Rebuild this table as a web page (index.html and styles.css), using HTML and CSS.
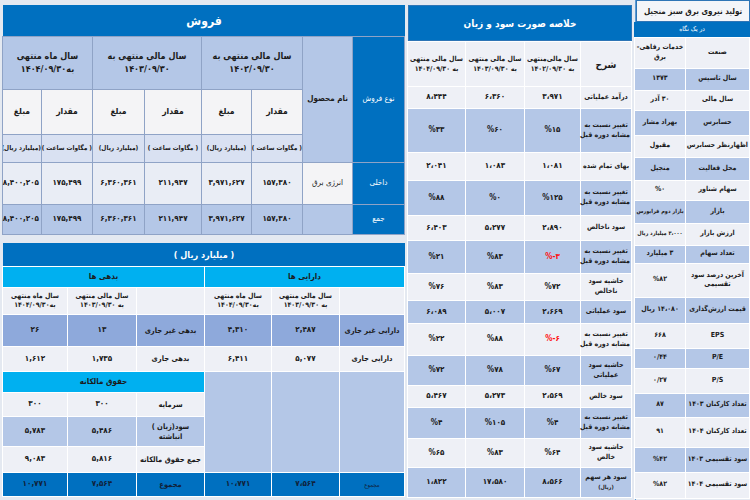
FILE: index.html
```html
<!DOCTYPE html>
<html lang="fa" dir="rtl">
<head>
<meta charset="utf-8">
<title>تولید نیروی برق سبز منجیل</title>
<link rel="stylesheet" href="styles.css">
</head>
<body>
<div class="page">

  <aside class="glance">
    <div class="glance-title">تولید نیروی برق سبز منجیل</div>
    <table class="gt">
      <colgroup><col class="c-gl"><col class="c-gv"></colgroup>
      <tr class="h15"><th colspan="2" class="dark small">در یک نگاه</th></tr>
      <tr class="w h31"><td>صنعت</td><td>خدمات رفاهی-<br>برق</td></tr>
      <tr class="b h22"><td>سال تاسیس</td><td>۱۳۷۳</td></tr>
      <tr class="w h20"><td>سال مالی</td><td>۳۰ آذر</td></tr>
      <tr class="b h25"><td>حسابرس</td><td>بهراد مشار</td></tr>
      <tr class="w h22"><td>اظهارنظر حسابرس</td><td>مقبول</td></tr>
      <tr class="b h23"><td>محل فعالیت</td><td>منجیل</td></tr>
      <tr class="w h20"><td>سهام شناور</td><td>%۰</td></tr>
      <tr class="b h23"><td>بازار</td><td class="fit">بازار دوم فرابورس</td></tr>
      <tr class="w h22"><td>ارزش بازار</td><td class="fit">۳،۰۰۰ میلیارد ریال</td></tr>
      <tr class="b h18"><td>تعداد سهام</td><td>۳ میلیارد</td></tr>
      <tr class="w h34"><td>آخرین درصد سود<br>تقسیمی</td><td>%۸۲</td></tr>
      <tr class="b h26"><td>قیمت ارزش‌گذاری</td><td>۱۴،۰۸۰ ریال</td></tr>
      <tr class="w h25"><td>EPS</td><td>۶۶۸</td></tr>
      <tr class="b h20"><td>P/E</td><td>۰/۴۴</td></tr>
      <tr class="w h25"><td>P/S</td><td>۰/۲۷</td></tr>
      <tr class="b h24"><td>تعداد کارکنان ۱۴۰۳</td><td>۸۷</td></tr>
      <tr class="w h30"><td>تعداد کارکنان ۱۴۰۴</td><td>۹۱</td></tr>
      <tr class="b h25"><td>سود تقسیمی ۱۴۰۳</td><td>%۴۲</td></tr>
      <tr class="w h26"><td>سود تقسیمی ۱۴۰۴</td><td>%۸۲</td></tr>
    </table>
  </aside>

  <section class="pl">
    <div class="bar pl-title">خلاصه صورت سود و زیان</div>
    <table class="pt">
      <colgroup><col class="c-p0"><col class="c-p1"><col class="c-p2"><col class="c-p3"></colgroup>
      <tr class="w h45 ph">
        <th class="big">شرح</th>
        <th>سال مالی‌منتهی<br>به ۱۴۰۲/۰۹/۳۰</th>
        <th>سال مالی منتهی<br>به ۱۴۰۳/۰۹/۳۰</th>
        <th>سال مالی منتهی<br>به ۱۴۰۴/۰۹/۳۰</th>
      </tr>
      <tr class="w h22"><td class="lbl">درآمد عملیاتی</td><td>۳،۹۷۱</td><td>۶،۳۶۰</td><td>۸،۴۴۴</td></tr>
      <tr class="b h44"><td class="lbl">تغییر نسبت به<br>مشابه دوره قبل</td><td>%۱۵</td><td>%۶۰</td><td>%۳۳</td></tr>
      <tr class="w h28"><td class="lbl">بهای تمام شده</td><td>۱،۰۸۱</td><td>۱،۰۸۳</td><td>۲،۰۴۱</td></tr>
      <tr class="b h35"><td class="lbl">تغییر نسبت به<br>مشابه دوره قبل</td><td>%۱۲۵</td><td>%۰</td><td>%۸۸</td></tr>
      <tr class="w h25"><td class="lbl">سود ناخالص</td><td>۲،۸۹۰</td><td>۵،۲۷۷</td><td>۶،۴۰۳</td></tr>
      <tr class="b h33"><td class="lbl">تغییر نسبت به<br>مشابه دوره قبل</td><td class="neg"><span class="ltr">%-۳</span></td><td>%۸۳</td><td>%۲۱</td></tr>
      <tr class="w h27"><td class="lbl">حاشیه سود<br>ناخالص</td><td>%۷۲</td><td>%۸۳</td><td>%۷۶</td></tr>
      <tr class="b h23"><td class="lbl">سود عملیاتی</td><td>۲،۶۶۹</td><td>۵،۰۰۷</td><td>۶،۰۸۹</td></tr>
      <tr class="w h32"><td class="lbl">تغییر نسبت به<br>مشابه دوره قبل</td><td class="neg"><span class="ltr">%-۶</span></td><td>%۸۸</td><td>%۲۲</td></tr>
      <tr class="b h30"><td class="lbl">حاشیه سود<br>عملیاتی</td><td>%۶۷</td><td>%۷۸</td><td>%۷۲</td></tr>
      <tr class="w h22"><td class="lbl">سود خالص</td><td>۲،۵۶۹</td><td>۵،۲۷۳</td><td>۵،۴۶۷</td></tr>
      <tr class="b h31"><td class="lbl">تغییر نسبت به<br>مشابه دوره قبل</td><td>%۴</td><td>%۱۰۵</td><td>%۴</td></tr>
      <tr class="w h29"><td class="lbl">حاشیه سود<br>خالص</td><td>%۶۴</td><td>%۸۳</td><td>%۶۵</td></tr>
      <tr class="b h30"><td class="lbl">سود هر سهم<br><span class="tiny">(ریال)</span></td><td>۸،۵۶۶</td><td>۱۷،۵۸۰</td><td>۱،۸۲۲</td></tr>
    </table>
  </section>

  <div class="leftcol">
    <section class="sales">
      <div class="bar sales-title">فروش</div>
      <table class="st">
        <colgroup>
          <col class="c-s0"><col class="c-s1"><col class="c-s2"><col class="c-s3">
          <col class="c-s4"><col class="c-s5"><col class="c-s6"><col class="c-s7">
        </colgroup>
        <tr class="h53">
          <th rowspan="3" class="dark">نوع فروش</th>
          <th rowspan="3" class="lb">نام محصول</th>
          <th colspan="2" class="lb yr">سال مالی منتهی به<br>۱۴۰۲/۰۹/۳۰</th>
          <th colspan="2" class="lb yr">سال مالی منتهی به<br>۱۴۰۳/۰۹/۳۰</th>
          <th colspan="2" class="lb yr">سال ماه منتهی<br>به۱۴۰۴/۰۹/۳۰</th>
        </tr>
        <tr class="h45 wt">
          <th>مقدار</th><th>مبلغ</th><th>مقدار</th><th>مبلغ</th><th>مقدار</th><th>مبلغ</th>
        </tr>
        <tr class="h28 un">
          <th>( مگاوات ساعت )</th><th>(میلیارد ریال)</th><th>( مگاوات ساعت )</th><th>(میلیارد ریال)</th><th>( مگاوات ساعت )</th><th>(میلیارد ریال)</th>
        </tr>
        <tr class="h42 rw">
          <td class="dark">داخلی</td><td class="pname">انرژی برق</td>
          <td>۱۵۷,۳۸۰</td><td>۳,۹۷۱,۶۲۷</td><td>۲۱۱,۹۴۷</td><td>۶,۳۶۰,۳۶۱</td><td>۱۷۵,۴۹۹</td><td>۸,۴۰۰,۲۰۵</td>
        </tr>
        <tr class="h30 b">
          <td class="dark">جمع</td><td></td>
          <td>۱۵۷,۳۸۰</td><td>۳,۹۷۱,۶۲۷</td><td>۲۱۱,۹۴۷</td><td>۶,۳۶۰,۳۶۱</td><td>۱۷۵,۴۹۹</td><td>۸,۴۰۰,۲۰۵</td>
        </tr>
      </table>
    </section>

    <section class="balance">
      <div class="bar bal-title">( میلیارد ریال )</div>
      <table class="bt">
        <colgroup>
          <col class="c-b0"><col class="c-b1"><col class="c-b2">
          <col class="c-b3"><col class="c-b4"><col class="c-b5">
        </colgroup>
        <tr class="h21 cy"><th colspan="3">دارایی ها</th><th colspan="3">بدهی ها</th></tr>
        <tr class="h27 w yh">
          <th></th><th>سال مالی منتهی<br>به ۱۴۰۳/۰۹/۳۰</th><th>سال ماه منتهی<br>به۱۴۰۴/۰۹/۳۰</th>
          <th></th><th>سال مالی منتهی<br>به ۱۴۰۳/۰۹/۳۰</th><th>سال ماه منتهی<br>به۱۴۰۴/۰۹/۳۰</th>
        </tr>
        <tr class="h32 mb">
          <td class="lbl">دارایی غیر جاری</td><td>۲,۴۸۷</td><td>۴,۳۱۰</td>
          <td class="lbl">بدهی غیر جاری</td><td>۱۳</td><td>۲۶</td>
        </tr>
        <tr class="h25 w">
          <td class="lbl">دارایی جاری</td><td>۵,۰۷۷</td><td>۶,۴۱۱</td>
          <td class="lbl">بدهی جاری</td><td>۱,۷۳۵</td><td>۱,۶۱۲</td>
        </tr>
        <tr class="h21">
          <td class="lb" rowspan="4"></td><td class="lb" rowspan="4"></td><td class="lb" rowspan="4"></td>
          <th colspan="3" class="cyc">حقوق مالکانه</th>
        </tr>
        <tr class="h24 w"><td class="lbl">سرمایه</td><td>۳۰۰</td><td>۳۰۰</td></tr>
        <tr class="h30 b"><td class="lbl">سود(زیان )<br>انباشته</td><td>۵,۴۸۶</td><td>۵,۷۸۳</td></tr>
        <tr class="h26 w"><td class="lbl">جمع حقوق مالکانه</td><td>۵,۸۱۶</td><td>۹,۰۸۳</td></tr>
        <tr class="h24 tot">
          <td class="tiny">مجموع</td><td>۷،۵۶۴</td><td>۱۰،۷۷۱</td>
          <td class="lbl">مجموع</td><td>۷,۵۶۴</td><td>۱۰,۷۷۱</td>
        </tr>
      </table>
    </section>
  </div>

</div>
</body>
</html>
```

FILE: styles.css
```css
* { box-sizing: border-box; }
html, body { margin: 0; padding: 0; }
body {
  width: 750px;
  height: 500px;
  overflow: hidden;
  background: #E4E9F1;
  font-family: "DejaVu Sans Condensed", "DejaVu Sans", sans-serif;
  color: #1b1b1b;
}
.page {
  display: grid;
  grid-template-columns: 115px 224px 402px;
  column-gap: 3px;
  padding-left: 3px;
  height: 500px;
}

table {
  border-collapse: collapse;
  table-layout: fixed;
  width: 100%;
}
th, td {
  padding: 0 2px;
  text-align: center;
  vertical-align: middle;
  font-size: 8px;
  font-weight: bold;
  line-height: 1.3;
}

/* row heights */
.h15 { height: 15px; } .h18 { height: 18px; } .h20 { height: 20px; }
.h21 { height: 21px; } .h22 { height: 22px; } .h23 { height: 23px; }
.h24 { height: 24px; } .h25 { height: 25px; } .h26 { height: 26px; }
.h27 { height: 27px; } .h28 { height: 28px; } .h29 { height: 29px; }
.h30 { height: 30px; } .h31 { height: 31px; } .h32 { height: 32px; }
.h33 { height: 33px; } .h34 { height: 34px; } .h35 { height: 35px; }
.h42 { height: 42px; } .h44 { height: 44px; } .h45 { height: 45px; }
.h53 { height: 53px; }

/* colours */
.w td, .w th { background: #EEF0F6; }
.b td, .b th { background: #B4C7E7; }
table td.dark, table th.dark { background: #0070C0; color: #fff; font-weight: normal; }
table .lb { background: #B4C7E7; }
.wt th { background: #F4F4F6; }

.bar {
  background: #0070C0;
  color: #fff;
  font-weight: bold;
  display: flex;
  align-items: center;
  justify-content: center;
}

.ltr { direction: ltr; unicode-bidi: isolate; }
.neg { color: #FF1010; }
.tiny { font-size: 6px; }

/* ---------- at a glance ---------- */
.glance { display: flex; flex-direction: column; border-left: 1px solid #5B9BD5; }
.glance-title {
  height: 22px;
  background: #F3F5F9;
  border: 1px solid #2E75B6;
  font-size: 8px;
  font-weight: bold;
  display: flex;
  align-items: center;
  justify-content: center;
  white-space: nowrap;
}
.gt td { border: 1px solid #fff; font-size: 7px; padding: 0 1px; white-space: nowrap; }
.gt td.fit { font-size: 5.6px; padding: 0; }
.gt th.small { font-size: 6.5px; }
.c-gl { width: 64px; }
.c-gv { width: 51px; }

/* ---------- P&L ---------- */
.pl { display: flex; flex-direction: column; padding-top: 5px; }
.pl-title { height: 36px; font-size: 10px; border: 1px solid #2E75B6; }
.pt td, .pt th { border: 1px solid #fff; }
.pt { border: 1px solid #C5D2E8; }
.ph th { font-size: 7px; line-height: 1.5; padding: 0; white-space: nowrap; }
.ph th.big { font-size: 10px; }
.pt td.lbl { font-size: 7px; line-height: 1.4; padding: 0 1px; white-space: nowrap; }
.pt td.lbl .tiny { font-size: 5.5px; }
.c-p0 { width: 51px; }
.c-p1 { width: 56px; }
.c-p2 { width: 59px; }
.c-p3 { width: 58px; }

/* ---------- left column ---------- */
.leftcol {
  display: flex;
  flex-direction: column;
  gap: 8px;
  padding-top: 5px;
}

/* sales */
.sales { height: 230px; display: flex; flex-direction: column; }
.sales-title { height: 32px; font-size: 12px; }
.st td, .st th { border: 1px solid #8FA3C6; }
.st th.yr { font-size: 9px; line-height: 1.5; }
.st .wt th { font-size: 8.5px; }
.un th { background: #D9E1F2; font-size: 6.5px; padding: 0; white-space: nowrap; overflow: hidden; }
.rw td { background: #E9EDF5; }
.rw td.pname { background: #F4F4F6; font-weight: normal; }
.c-s0 { width: 52px; } .c-s1 { width: 50px; } .c-s2 { width: 51px; } .c-s3 { width: 50px; }
.c-s4 { width: 57px; } .c-s5 { width: 52px; } .c-s6 { width: 51px; } .c-s7 { width: 39px; }

/* balance */
.balance { height: 254px; display: flex; flex-direction: column; }
.bal-title { height: 24px; font-size: 9px; }
.bt td, .bt th { border: 1px solid #fff; }
.cy th, table .cyc { background: #00B0F0; color: #1b1b1b; font-size: 8px; }
.yh th { font-size: 7px; line-height: 1.35; white-space: nowrap; }
.mb td { background: #8EA9DB; }
.tot td { background: #0070C0; color: #10223a; }
.tot td.tiny { font-size: 6px; font-weight: normal; }
.bt td.lbl { font-size: 7.5px; white-space: nowrap; }
.c-b0 { width: 65px; } .c-b1 { width: 68px; } .c-b2 { width: 67px; }
.c-b3 { width: 68px; } .c-b4 { width: 69px; } .c-b5 { width: 65px; }
```
